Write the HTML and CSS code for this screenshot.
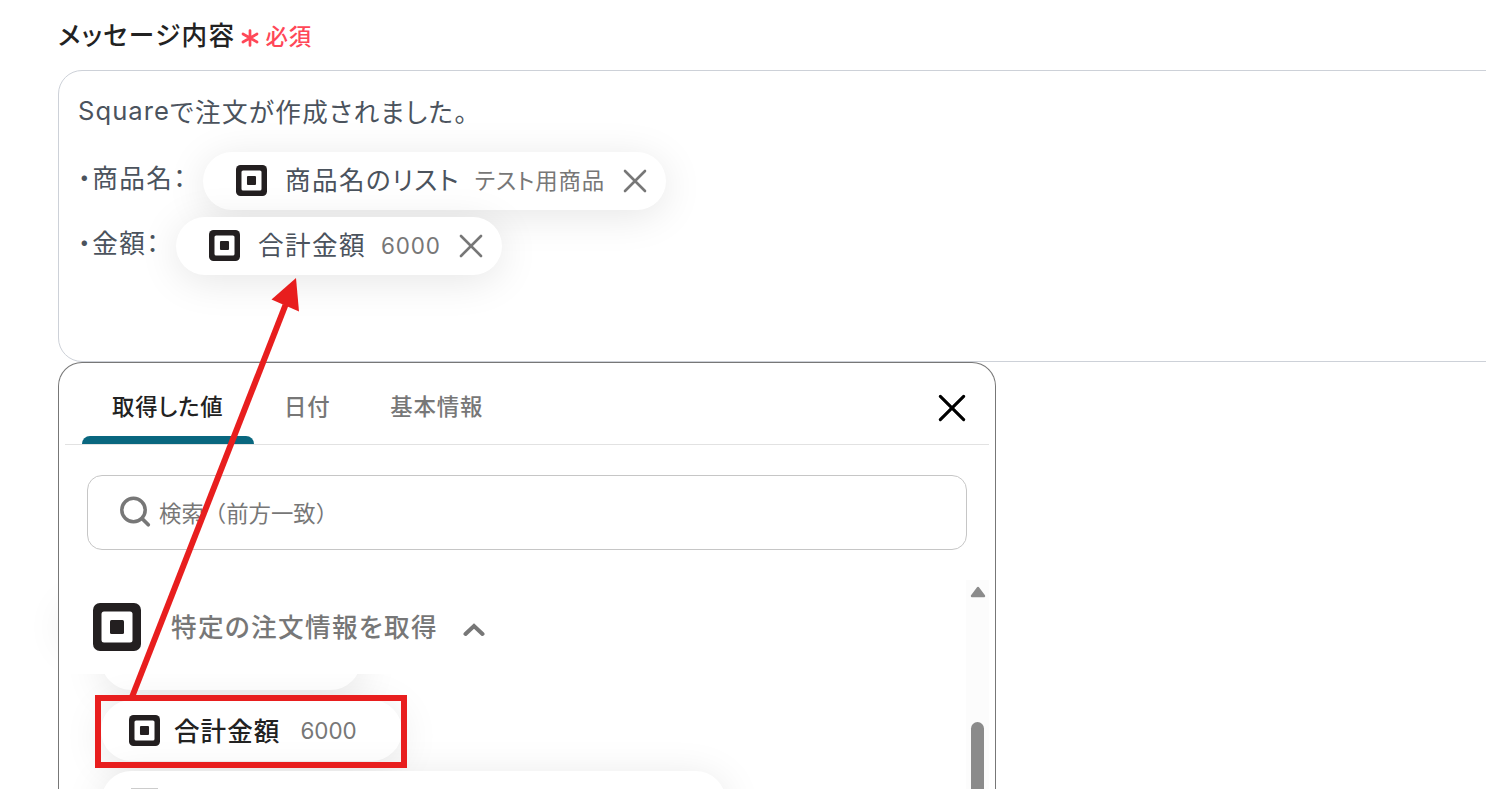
FILE: index.html
```
<!DOCTYPE html>
<html lang="ja">

<head>
    <meta charset="UTF-8" />
    <title>メッセージ内容</title>
    <link rel="stylesheet" href="styles.css">
</head>

<body>
    <svg width="0" height="0" class="defs">
        <symbol id="square" viewBox="0 0 48 48">
            <rect width="48" height="48" rx="7" fill="#231f20" />
            <rect x="8.500" y="8.500" width="31" height="31" rx="2.5" fill="#fff" />
            <rect x="17" y="17" width="14" height="14" rx="1.5" fill="#231f20" />
        </symbol>
        <symbol id="close" viewBox="0 0 24 24">
            <path d="M2 2L22 22M22 2L2 22" fill="none" stroke="currentColor" stroke-linecap="round" />
        </symbol>
    </svg>

    <div class="label">
        <span class="label-text">メッセージ内容</span>
        <svg class="asterisk" viewBox="0 0 18 18">
            <path d="M9 1.5V16.5M2 5L16 13M16 5L2 13" fill="none" stroke="#ff4757" stroke-width="2.7" stroke-linecap="round" />
        </svg>
        <span class="required">必須</span>
    </div>

    <div class="editor">
        <div class="line first"><span class="latin">Square</span>で注文が作成されました。</div>
        <div class="line">
            <span class="prefix">・商品名：</span>
            <span class="pill">
                <svg class="logo"><use href="#square" /></svg>
                <span class="name">商品名のリスト</span>
                <span class="value">テスト用商品</span>
                <svg class="remove"><use href="#close" /></svg>
            </span>
        </div>
        <div class="line">
            <span class="prefix short">・金額：</span>
            <span class="pill">
                <svg class="logo"><use href="#square" /></svg>
                <span class="name">合計金額</span>
                <span class="value number">6000</span>
                <svg class="remove"><use href="#close" /></svg>
            </span>
        </div>
    </div>

    <div class="picker-wrap">
        <div class="picker">
            <div class="tabs">
                <div class="tab active">取得した値</div>
                <div class="tab">日付</div>
                <div class="tab">基本情報</div>
                <svg class="close"><use href="#close" /></svg>
            </div>
            <div class="search">
                <svg class="search-icon" viewBox="0 0 32 32">
                    <circle cx="14.5" cy="14" r="11.7" fill="none" stroke="#777" stroke-width="3.5" />
                    <path d="M23 22.5L29.3 28.8" stroke="#777" stroke-width="3.7" stroke-linecap="round" />
                </svg>
                <span class="placeholder">検索（前方一致）</span>
            </div>
            <div class="results">
                <div class="list">
                    <div class="group">
                        <svg class="group-logo"><use href="#square" /></svg>
                        <span class="group-name">特定の注文情報を取得</span>
                        <svg class="chevron" viewBox="0 0 22 14">
                            <path d="M2.5 11L11 3L19.5 11" fill="none" stroke="#777" stroke-width="4" stroke-linecap="round" />
                        </svg>
                    </div>
                    <div class="items">
                        <div class="item prev"></div>
                        <div class="item">
                            <svg class="logo"><use href="#square" /></svg>
                            <span class="item-name">合計金額</span>
                            <span class="item-value">6000</span>
                        </div>
                        <div class="item next"><span class="logo-top"></span></div>
                    </div>
                </div>
                <div class="scrollbar">
                    <svg class="up" viewBox="0 0 16 12">
                        <path d="M8 2L14 10H2Z" fill="#8b8b8b" stroke="#8b8b8b" stroke-width="2.4" stroke-linejoin="round" />
                    </svg>
                    <div class="thumb"></div>
                </div>
            </div>
        </div>
    </div>

    <svg class="annotation" viewBox="0 0 1486 789">
        <path d="M132 697L285.500 305" stroke="#e81e1e" stroke-width="6" />
        <path d="M296 278L271.500 299.500L299 311.500Z" fill="#e81e1e" />
        <rect x="98" y="698" width="306" height="67" fill="none" stroke="#e81e1e" stroke-width="6" />
    </svg>
</body>

</html>
```
FILE: styles.css
```
* {
    box-sizing: border-box;
}

body {
    position: relative;
    margin: 0;
    width: 1486px;
    height: 789px;
    overflow: hidden;
    background: #fff;
    font-family: Inter, "Noto Sans CJK JP", sans-serif;
    font-size: 25.6px;
    letter-spacing: 0.054em;
    font-feature-settings: "palt";
    white-space: nowrap;
}

svg {
    display: block;
    flex: none;
}

.defs {
    display: none;
}

.label {
    display: flex;
    align-items: center;
    height: 70px;
    padding-left: 58px;
    color: #222;
    font-weight: 500;
}

.label-text {
    padding-bottom: 4px;
}

.asterisk {
    width: 18px;
    height: 18px;
    margin: 6px 6px 0 6px;
}

.required {
    color: #ff4757;
    font-size: 22.4px;
    letter-spacing: 0.04em;
}

.editor {
    width: 1500px;
    height: 292px;
    margin-left: 58px;
    padding: 16px 19px;
    border: 1px solid #cdd1d8;
    border-radius: 24px;
    color: #4b535d;
}

.line {
    display: flex;
    align-items: center;
    height: 65px;
}

.line.first {
    height: 51px;
    margin-bottom: 10px;
    padding-bottom: 4px;
}

.latin {
    letter-spacing: 0.04em;
}

.prefix {
    width: 125px;
    padding-bottom: 8px;
}

.prefix.short {
    width: 98px;
}

.pill {
    display: flex;
    align-items: center;
    height: 58px;
    padding: 0 19px 0 33px;
    border-radius: 29px;
    background: #fff;
    box-shadow: 0 6px 40px rgba(0, 0, 0, 0.1);
}

.logo {
    width: 31px;
    height: 31px;
}

.name {
    margin-left: 18px;
    padding-bottom: 4px;
}

.value {
    margin-left: 15px;
    padding-bottom: 4px;
    color: #777;
    font-size: 22.4px;
    letter-spacing: 0.04em;
}

.value.number {
    padding-bottom: 0;
}

.remove {
    width: 24px;
    height: 24px;
    margin-left: 18px;
    color: #777;
    stroke-width: 2.6;
}

.picker-wrap {
    position: relative;
    height: 427px;
    margin-left: 58px;
    width: 938px;
}

/* soft shade spilling out on the left of the picker */
.picker-wrap::before {
    content: "";
    position: absolute;
    left: 2px;
    top: 240px;
    width: 100px;
    height: 50px;
    border-radius: 25px;
    box-shadow: 0 0 40px rgba(0, 0, 0, 0.07);
}

.picker {
    position: relative;
    height: 427px;
    padding: 0 6px;
    border: 1px solid #777;
    border-bottom: none;
    border-radius: 24px 24px 0 0;
    background: #fff;
    overflow: hidden;
}

.tabs {
    display: flex;
    height: 82px;
    padding-left: 17px;
    border-bottom: 1px solid #e2e2e2;
    color: #777;
    font-size: 22.4px;
    font-weight: 500;
    letter-spacing: 0.035em;
}

.tab {
    position: relative;
    padding: 0 30px;
    line-height: 88px;
}

.tab.active {
    width: 172px;
    color: #222;
}

.tab.active::after {
    content: "";
    position: absolute;
    left: 0;
    bottom: 0;
    width: 172px;
    height: 8px;
    border-radius: 8px 8px 0 0;
    background: #09677f;
}

.close {
    width: 28px;
    height: 28px;
    margin: 31px 23px 0 auto;
    color: #000;
    stroke-width: 2.7;
}

.search {
    display: flex;
    align-items: center;
    height: 75px;
    margin: 30px 22px 0;
    padding-left: 31px;
    border: 1px solid #c6c6c6;
    border-radius: 15px;
    color: #777;
    font-size: 22.4px;
    letter-spacing: 0;
    font-feature-settings: normal;
}

.search-icon {
    width: 32px;
    height: 32px;
    margin: 0 8px 2px 0;
}

.placeholder {
    padding-bottom: 2px;
}

.results {
    display: flex;
    height: 209px;
    margin-top: 30px;
}

.list {
    flex: 1;
}

.group {
    display: flex;
    align-items: center;
    height: 94px;
    padding-left: 28px;
    color: #777;
    font-weight: 500;
}

.group-logo {
    width: 48px;
    height: 48px;
}

.group-name {
    margin-left: 30px;
    padding-bottom: 4px;
}

.chevron {
    width: 22px;
    height: 14px;
    margin: 5px 0 0 25px;
}

.items {
    height: 115px;
    padding-left: 36px;
    overflow: hidden;
}

.item {
    display: flex;
    align-items: center;
    width: 301px;
    height: 61px;
    margin-bottom: 10px;
    padding-left: 28px;
    border-radius: 31px;
    background: #fff;
    box-shadow: 0 6px 40px rgba(0, 0, 0, 0.1);
}

.item.prev {
    width: 260px;
    margin-top: -45px;
}

.item.next {
    width: 625px;
    align-items: flex-start;
}

.item-name {
    margin-left: 14px;
    padding-bottom: 3px;
    color: #222;
    font-weight: 500;
    letter-spacing: 0.04em;
}

.item-value {
    margin-left: 20px;
    color: #777;
    font-size: 22.4px;
    letter-spacing: 0;
}

.logo-top {
    width: 27px;
    height: 2px;
    margin: 17px 0 0 2px;
    background: #ccc;
}

.scrollbar {
    width: 23px;
    background: #fcfcfc;
}

.up {
    width: 16px;
    height: 12px;
    margin: 6px 0 0 4px;
}

.thumb {
    width: 13px;
    height: 67px;
    margin: 124px 0 0 5px;
    border-radius: 7px 7px 0 0;
    background: #8b8b8b;
}

.annotation {
    position: absolute;
    left: 0;
    top: 0;
    width: 1486px;
    height: 789px;
}
```
